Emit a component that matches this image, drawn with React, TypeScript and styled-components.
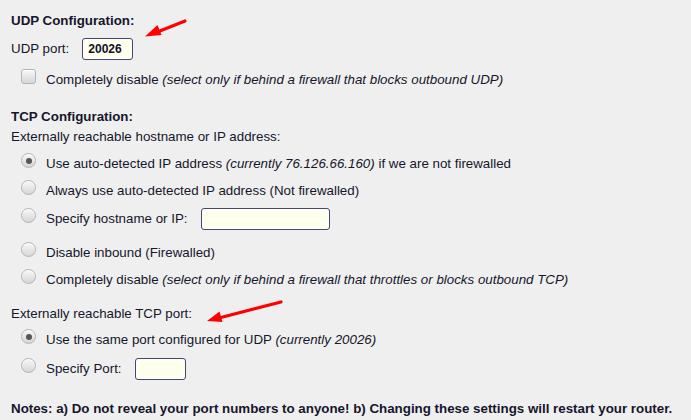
import React from "react";
import styled, { createGlobalStyle } from "styled-components";

const Global = createGlobalStyle`
  html, body { margin: 0; padding: 0; background: #efefef; }
  body { font-family: "Liberation Sans", Arial, sans-serif; font-size: 13.33px; color: #16162c; }
`;

const Page = styled.div`
  position: relative;
  width: 691px;
  height: 420px;
  box-sizing: border-box;
  padding: 13px 0 0 11px;
  display: flex;
  flex-direction: column;
  overflow: hidden;
`;

const Heading = styled.div<{ $mt?: number }>`
  font-weight: bold;
  line-height: 16px;
  height: 16px;
  margin-top: ${(p) => p.$mt ?? 0}px;
  white-space: nowrap;
`;

const Label = styled.div<{ $mt: number }>`
  line-height: 16px;
  height: 16px;
  margin-top: ${(p) => p.$mt}px;
  white-space: nowrap;
`;

const Row = styled.div<{ $mt: number; $h?: number; $indent?: boolean }>`
  display: flex;
  align-items: center;
  height: ${(p) => p.$h ?? 16}px;
  margin-top: ${(p) => p.$mt}px;
  padding-left: ${(p) => (p.$indent ? 10 : 0)}px;
  white-space: nowrap;
`;

const RowText = styled.span`
  line-height: 16px;
`;

const Em = styled.i``;

const TextInput = styled.input<{ $w: number; $bold?: boolean }>`
  box-sizing: border-box;
  width: ${(p) => p.$w}px;
  height: 22px;
  margin-left: 13px;
  background: #ffffee;
  border: 1px solid #45457a;
  border-radius: 3px;
  padding: 0 5px;
  font-family: "Liberation Sans", Arial, sans-serif;
  font-size: 12px;
  font-weight: ${(p) => (p.$bold ? "bold" : "normal")};
  color: #111128;
  outline: none;
`;

const Control = styled.span<{ $round?: boolean }>`
  box-sizing: border-box;
  flex: none;
  width: 15px;
  height: 15px;
  margin-bottom: 7px;
  margin-right: 10px;
  border: 1px solid #b4b4b4;
  border-radius: ${(p) => (p.$round ? "50%" : "3px")};
  background: linear-gradient(#f8f8f8, #d6d6d6);
  box-shadow: inset 0 1px 0 #ffffff;
  display: flex;
  align-items: center;
  justify-content: center;
`;

const Dot = styled.span`
  width: 6px;
  height: 6px;
  border-radius: 50%;
  background: #565656;
`;

const Arrows = styled.svg`
  position: absolute;
  left: 0;
  top: 0;
  pointer-events: none;
`;

const Radio = ({ checked }: { checked?: boolean }) => (
  <Control $round>{checked ? <Dot /> : null}</Control>
);

export default function App() {
  return (
    <>
      <Global />
      <Page>
        <Heading>UDP Configuration:</Heading>
        <Row $mt={9} $h={22}>
          <RowText>UDP port:</RowText>
          <TextInput $w={51} $bold defaultValue="20026" />
        </Row>
        <Row $mt={12} $indent>
          <Control />
          <RowText>
            Completely disable <Em>(select only if behind a firewall that blocks outbound UDP)</Em>
          </RowText>
        </Row>

        <Heading $mt={21}>TCP Configuration:</Heading>
        <Label $mt={4}>Externally reachable hostname or IP address:</Label>
        <Row $mt={11} $indent>
          <Radio checked />
          <RowText>
            Use auto-detected IP address <Em>(currently 76.126.66.160)</Em> if we are not firewalled
          </RowText>
        </Row>
        <Row $mt={11} $indent>
          <Radio />
          <RowText>Always use auto-detected IP address (Not firewalled)</RowText>
        </Row>
        <Row $mt={9} $h={22} $indent>
          <Radio />
          <RowText>Specify hostname or IP:</RowText>
          <TextInput $w={129} />
        </Row>
        <Row $mt={15} $indent>
          <Radio />
          <RowText>Disable inbound (Firewalled)</RowText>
        </Row>
        <Row $mt={11} $indent>
          <Radio />
          <RowText>
            Completely disable <Em>(select only if behind a firewall that throttles or blocks outbound TCP)</Em>
          </RowText>
        </Row>

        <Label $mt={18}>Externally reachable TCP port:</Label>
        <Row $mt={10} $indent>
          <Radio checked />
          <RowText>
            Use the same port configured for UDP <Em>(currently 20026)</Em>
          </RowText>
        </Row>
        <Row $mt={10} $h={22} $indent>
          <Radio />
          <RowText>Specify Port:</RowText>
          <TextInput $w={51} />
        </Row>

        <Heading $mt={21}>
          Notes: a) Do not reveal your port numbers to anyone! b) Changing these settings will restart your router.
        </Heading>

        <Arrows width="691" height="420" viewBox="0 0 691 420">
          <g stroke="#ff0000" strokeWidth="3.2" strokeLinecap="round" fill="#ff0000">
            <line x1="185" y1="21" x2="156" y2="32.5" />
            <polygon points="145,36.5 157.5,25 161.5,35" stroke="none" />
            <line x1="281" y1="302" x2="219" y2="318" />
            <polygon points="207,321 219.5,311.5 222.5,322" stroke="none" />
          </g>
        </Arrows>
      </Page>
    </>
  );
}
